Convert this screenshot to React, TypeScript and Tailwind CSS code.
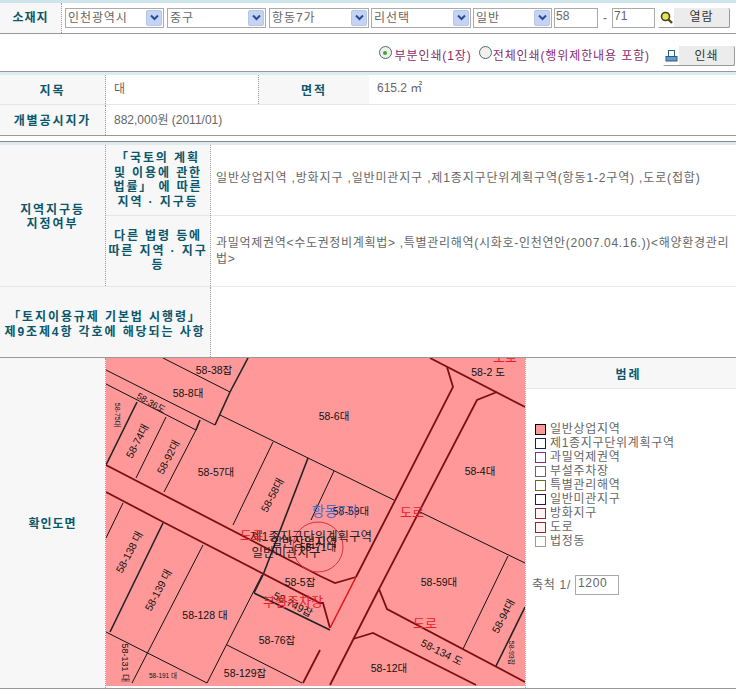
import React from "react";

const head = "bg-[#f7f7f7] flex items-center justify-center text-center font-bold text-[#0a566a] text-[12px] tracking-[1.9px] leading-[14.5px]";
const dotR = "border-r border-dotted border-[#999]";
const val = "text-[#666] text-[12px] tracking-[0.7px] leading-[16px]";

function Sel({ w, text }: { w: string; text: string }) {
  return (
    <div className={`${w} h-[20px] border border-[#aaa] bg-white flex items-center justify-between pl-[2px] pr-[1px] text-[12px] tracking-[0.9px] text-[#666]`}>
      <span>{text}</span>
      <span className="w-[16px] h-[16px] rounded-[2px] bg-[#c3d4f5] border border-[#b4c6ea] flex items-center justify-center">
        <svg width="9" height="7" viewBox="0 0 9 7"><path d="M1 1.5 L4.5 5 L8 1.5" fill="none" stroke="#2b4a94" strokeWidth="2" /></svg>
      </span>
    </div>
  );
}

function Btn({ w, icon, text }: { w: string; icon: React.ReactNode; text: string }) {
  return (
    <div className={`${w} h-[20px] flex items-center border-r border-b border-[#999] rounded-[2px] bg-[#ececec] text-[12px] text-[#333] tracking-[0.9px]`}>
      <span className="w-[16px] h-full bg-white flex items-center justify-center shrink-0">{icon}</span>
      <span className="flex-1 text-center">{text}</span>
    </div>
  );
}

function Radio({ on }: { on?: boolean }) {
  return (
    <span className="w-[13px] h-[13px] -mt-[7px] rounded-full border border-[#4a6a7a] bg-[#f1f1ea] flex items-center justify-center">
      {on && <span className="w-[4px] h-[4px] rounded-full bg-[#3aa63a]" />}
    </span>
  );
}

const thin: [number, number, number, number][] = [
  [163, 358, 230, 392], [106, 370, 215, 425], [106, 384, 196, 430], [220, 415, 394, 500],
  [166, 417, 136, 478], [196, 430, 164, 492], [273, 442, 233, 525], [334, 471, 311, 520],
  [420, 512, 525, 563], [508, 556, 463, 649], [106, 632, 207, 683], [203, 545, 132, 683],
  [262, 575, 207, 683], [227, 645, 302, 683], [123, 503, 106, 538],
];
const thick: [number, number, number, number][] = [
  [230, 392, 215, 425], [248, 358, 230, 392], [137, 402, 106, 465], [308, 458, 263, 575],
  [163, 523, 110, 632], [525, 607, 496, 666], [200, 420, 196, 430],
];
const black2: [number, number, number, number][] = [[254, 593, 330, 630], [263, 575, 254, 593]];
const red = "#7a1012";

const flat: [string, number, number, number?][] = [
  ["58-38잡", 214, 374], ["58-8대", 188, 397], ["58-6대", 334, 420], ["58-57대", 216, 476],
  ["58-2 도", 488, 376], ["58-4대", 480, 475], ["58-59대", 439, 586], ["58-12대", 389, 672],
  ["58-128 대", 205, 619], ["58-76잡", 277, 644], ["58-129잡", 245, 677], ["58-5잡", 300, 586],
  ["58-191 대", 163, 678, 6.5], ["58-59대", 351, 515],
  ["58-71대", 318, 551], ["일반상업지역", 304, 547, 12],
];
const rotated: [string, number, number, number, number?][] = [
  ["58-74대", 137, 441, -62], ["58-92대", 168, 457, -62], ["58-58대", 272, 495, -62],
  ["58-138 대", 129, 552, -62], ["58-139 대", 158, 590, -62], ["58-94대", 503, 616, -62],
  ["58-134 도", 442, 652, 27], ["58-749잡", 293, 604, 27], ["58-36도", 151, 403, 30, 9],
  ["58-75대", 117, 415, 90, 7], ["58-93잡", 511, 653, 90, 7], ["58-131 대", 125, 663, 90, 9],
];

function MapSvg() {
  return (
    <svg viewBox="106 358 419 328" className="w-[419px] h-[328px] block bg-[#ff9999]" fontFamily="'Liberation Sans','Noto Sans CJK KR',sans-serif">
      {thin.map((l, i) => <line key={i} x1={l[0]} y1={l[1]} x2={l[2]} y2={l[3]} stroke="#111" strokeWidth="1" />)}
      {thick.map((l, i) => <line key={i} x1={l[0]} y1={l[1]} x2={l[2]} y2={l[3]} stroke="#222" strokeWidth="1.6" />)}
      {black2.map((l, i) => <line key={i} x1={l[0]} y1={l[1]} x2={l[2]} y2={l[3]} stroke="#222" strokeWidth="1.6" />)}
      <g fill="none" stroke={red} strokeWidth="1.8">
        <path d="M106 465 L320 576 L335 583 L356 577" />
        <path d="M106 492 L165 523 L320 603 L323 603 L330 628" />
        <path d="M320 650 L303 683" />
        <path d="M356 577 L453 387 L447 367" />
        <path d="M430 358 L525 407" />
        <path d="M497 392 L477 400 L379 589 L387 609 L525 682" />
        <path d="M379 589 L330 685" />
        <path d="M353 639 L373 633 L476 685" />
      </g>
      <line x1="330" y1="628" x2="356" y2="577" stroke="#e8141c" strokeWidth="1.6" />
      <circle cx="318" cy="547" r="25" fill="none" stroke="#d8303a" strokeWidth="1" />
      {flat.map(([t, x, y, s], i) => (
        <text key={i} x={x} y={y} fontSize={s ?? 10.5} fill="#111" textAnchor="middle">{t}</text>
      ))}
      {rotated.map(([t, x, y, r, s], i) => (
        <text key={i} x={x} y={y} fontSize={s ?? 10.5} fill="#111" textAnchor="middle" dominantBaseline="central" transform={`rotate(${r} ${x} ${y})`}>{t}</text>
      ))}
      <text x="335" y="516" fontSize="14" fill="#4a6cc4" textAnchor="middle">항동7가</text>
      <text x="311" y="541" fontSize="12.5" fill="#222" textAnchor="middle">제1종지구단위계획구역</text>
      <text x="286" y="557" fontSize="12.5" fill="#222" textAnchor="middle">일반미관지구</text>
      <text x="252" y="540" fontSize="13" fill="#e8202a" textAnchor="middle">도로</text>
      <text x="412" y="517" fontSize="13" fill="#e8202a" textAnchor="middle">도로</text>
      <text x="425" y="628" fontSize="13" fill="#e8202a" textAnchor="middle">도로</text>
      <text x="505" y="362" fontSize="13" fill="#e8202a" textAnchor="middle">도로</text>
      <text x="293" y="606" fontSize="13" fill="#e8202a" textAnchor="middle">부설주차장</text>
    </svg>
  );
}

const legend: [string, string, string][] = [
  ["일반상업지역", "border-black", "bg-[#ff9999]"],
  ["제1종지구단위계획구역", "border-[#1a1a6a]", "bg-white"],
  ["과밀억제권역", "border-[#8a2a7a]", "bg-white"],
  ["부설주차장", "border-[#666]", "bg-white"],
  ["특별관리해역", "border-[#6b6b1a]", "bg-white"],
  ["일반미관지구", "border-[#3a0a5a]", "bg-white"],
  ["방화지구", "border-[#8a2a2a]", "bg-[#fff4f4]"],
  ["도로", "border-[#8a2a2a]", "bg-[#fff4f4]"],
  ["법정동", "border-[#a09a8a]", "bg-white"],
];

export default function App() {
  return (
    <div className="w-[736px] h-[692px] overflow-hidden bg-white font-['Liberation_Sans','Noto_Sans_CJK_KR',sans-serif]">
      <div className="h-[3px] bg-[#cfe4e8]" />
      <div className="h-[31px] flex border-b border-[#999]">
        <div className={`w-[62px] ${head} ${dotR} !tracking-[1px]`}>소재지</div>
        <div className="flex-1 flex items-center pl-[3px] pb-[1px]">
          <Sel w="w-[99px] mr-[3px]" text="인천광역시" />
          <Sel w="w-[99px] mr-[3px]" text="중구" />
          <Sel w="w-[100px] mr-[2px]" text="항동7가" />
          <Sel w="w-[100px] mr-[2px]" text="리선택" />
          <Sel w="w-[79px] mr-[2px]" text="일반" />
          <div className="w-[44px] h-[20px] border border-[#aaa] text-[12px] text-[#666] pl-[1px] leading-[15px]">58</div>
          <span className="w-[14px] text-center text-[12px] text-[#666]">-</span>
          <div className="w-[43px] h-[20px] border border-[#aaa] text-[12px] text-[#666] pl-[1px] leading-[15px] mr-[3px]">71</div>
          <Btn w="w-[72px]" text="열람" icon={
            <svg width="13" height="13" viewBox="0 0 13 13"><circle cx="5.5" cy="5.5" r="4" fill="#e8e060" stroke="#3a4a10" strokeWidth="1.6" /><path d="M8.5 8.5 L12 12" stroke="#5a4a10" strokeWidth="2.4" /></svg>
          } />
        </div>
      </div>
      <div className="h-[38px] flex items-center justify-end pr-[1px] pt-[7px] border-b border-[#999] text-[12px] tracking-[0.9px] text-[#8a2a6e]">
        <Radio on />
        <span className="ml-[3px] mr-[7px]">부분인쇄(1장)</span>
        <Radio />
        <span className="ml-[1px] mr-[13px]">전체인쇄(행위제한내용 포함)</span>
        <Btn w="w-[72px]" text="인쇄" icon={
          <svg width="13" height="13" viewBox="0 0 13 13"><rect x="3.5" y="1.5" width="6" height="6" fill="#fff" stroke="#2a5a8a" /><rect x="1" y="7.5" width="11" height="4.5" fill="#6a9ac8" stroke="#2a5a8a" /></svg>
        } />
      </div>
      <div className="h-[3px] bg-[#dcecef]" />
      <div className="h-[30px] flex border-b border-[#e6e6e6]">
        <div className={`w-[106px] ${head} ${dotR} pt-[3px]`}>지목</div>
        <div className={`w-[153px] pl-[8px] pt-[6px] ${val} ${dotR}`}>대</div>
        <div className={`w-[110px] ${head} pt-[3px]`}>면적</div>
        <div className={`flex-1 pl-[8px] pt-[5px] ${val} !tracking-[0px]`}>615.2 ㎡</div>
      </div>
      <div className="h-[31px] flex border-b border-[#999]">
        <div className={`w-[106px] ${head} ${dotR} pt-[3px]`}>개별공시지가</div>
        <div className={`flex-1 pl-[8px] pt-[7px] ${val} !tracking-[0px]`}>882,000원 (2011/01)</div>
      </div>
      <div className="h-[5px]" />
      <div className="h-[1px] bg-[#888]" />
      <div className="h-[3px] bg-[#dcecef]" />
      <div className="flex border-b border-[#999]">
        <div className="w-[211px] shrink-0">
          <div className="flex h-[142px] border-b border-[#e6e6e6]">
            <div className={`w-[106px] ${head} ${dotR} pt-[3px]`}>지역지구등<br />지정여부</div>
            <div className={`w-[105px] flex flex-col ${dotR}`}>
              <div className={`h-[71px] border-b border-[#e6e6e6] ${head} px-[1px]`}>「국토의 계획<br />및 이용에 관한<br />법률」 에 따른<br />지역 · 지구등</div>
              <div className={`flex-1 ${head} px-[1px]`}>다른 법령 등에<br />따른 지역 · 지구<br />등</div>
            </div>
          </div>
          <div className={`h-[70px] ${head} ${dotR} pt-[5px] whitespace-nowrap`}>「토지이용규제 기본법 시행령」<br />제9조제4항 각호에 해당되는 사항</div>
        </div>
        <div className="flex-1">
          <div className={`h-[71px] border-b border-[#e6e6e6] flex items-center pl-[5px] pr-[2px] pb-[4px] ${val} !tracking-[0.85px]`}>일반상업지역 ,방화지구 ,일반미관지구 ,제1종지구단위계획구역(항동1-2구역) ,도로(접합)</div>
          <div className={`h-[71px] border-b border-[#e6e6e6] flex items-center pl-[5px] pr-[2px] ${val}`}>과밀억제권역&lt;수도권정비계획법&gt; ,특별관리해역(시화호-인천연안(2007.04.16.))&lt;해양환경관리법&gt;</div>
          <div className="h-[70px]" />
        </div>
      </div>
      <div className="flex h-[331px] border-b border-[#999]">
        <div className={`w-[106px] ${head} ${dotR} pt-[3px] !tracking-[1px]`}>확인도면</div>
        <div className="w-[419px] shrink-0"><MapSvg /></div>
        <div className="flex-1 border-l border-dotted border-[#e0a0a0]">
          <div className={`h-[31px] border-b border-[#e6e6e6] ${head} pt-[4px] pr-[5px]`}>범례</div>
          <div className="pl-[9px] pt-[33px]">
            {legend.map(([t, b, f]) => (
              <div key={t} className={`h-[14px] flex items-center ${val}`}>
                <span className={`w-[11px] h-[11px] border ${b} ${f} mr-[4px] shrink-0`} />
                <span>{t}</span>
              </div>
            ))}
          </div>
          <div className={`flex items-center pl-[6px] mt-[27px] ${val}`}>
            <span className="mr-[4px]">축척 1/</span>
            <div className="w-[44px] h-[20px] border border-[#aaa] pl-[2px] leading-[15px]">1200</div>
          </div>
        </div>
      </div>
    </div>
  );
}
